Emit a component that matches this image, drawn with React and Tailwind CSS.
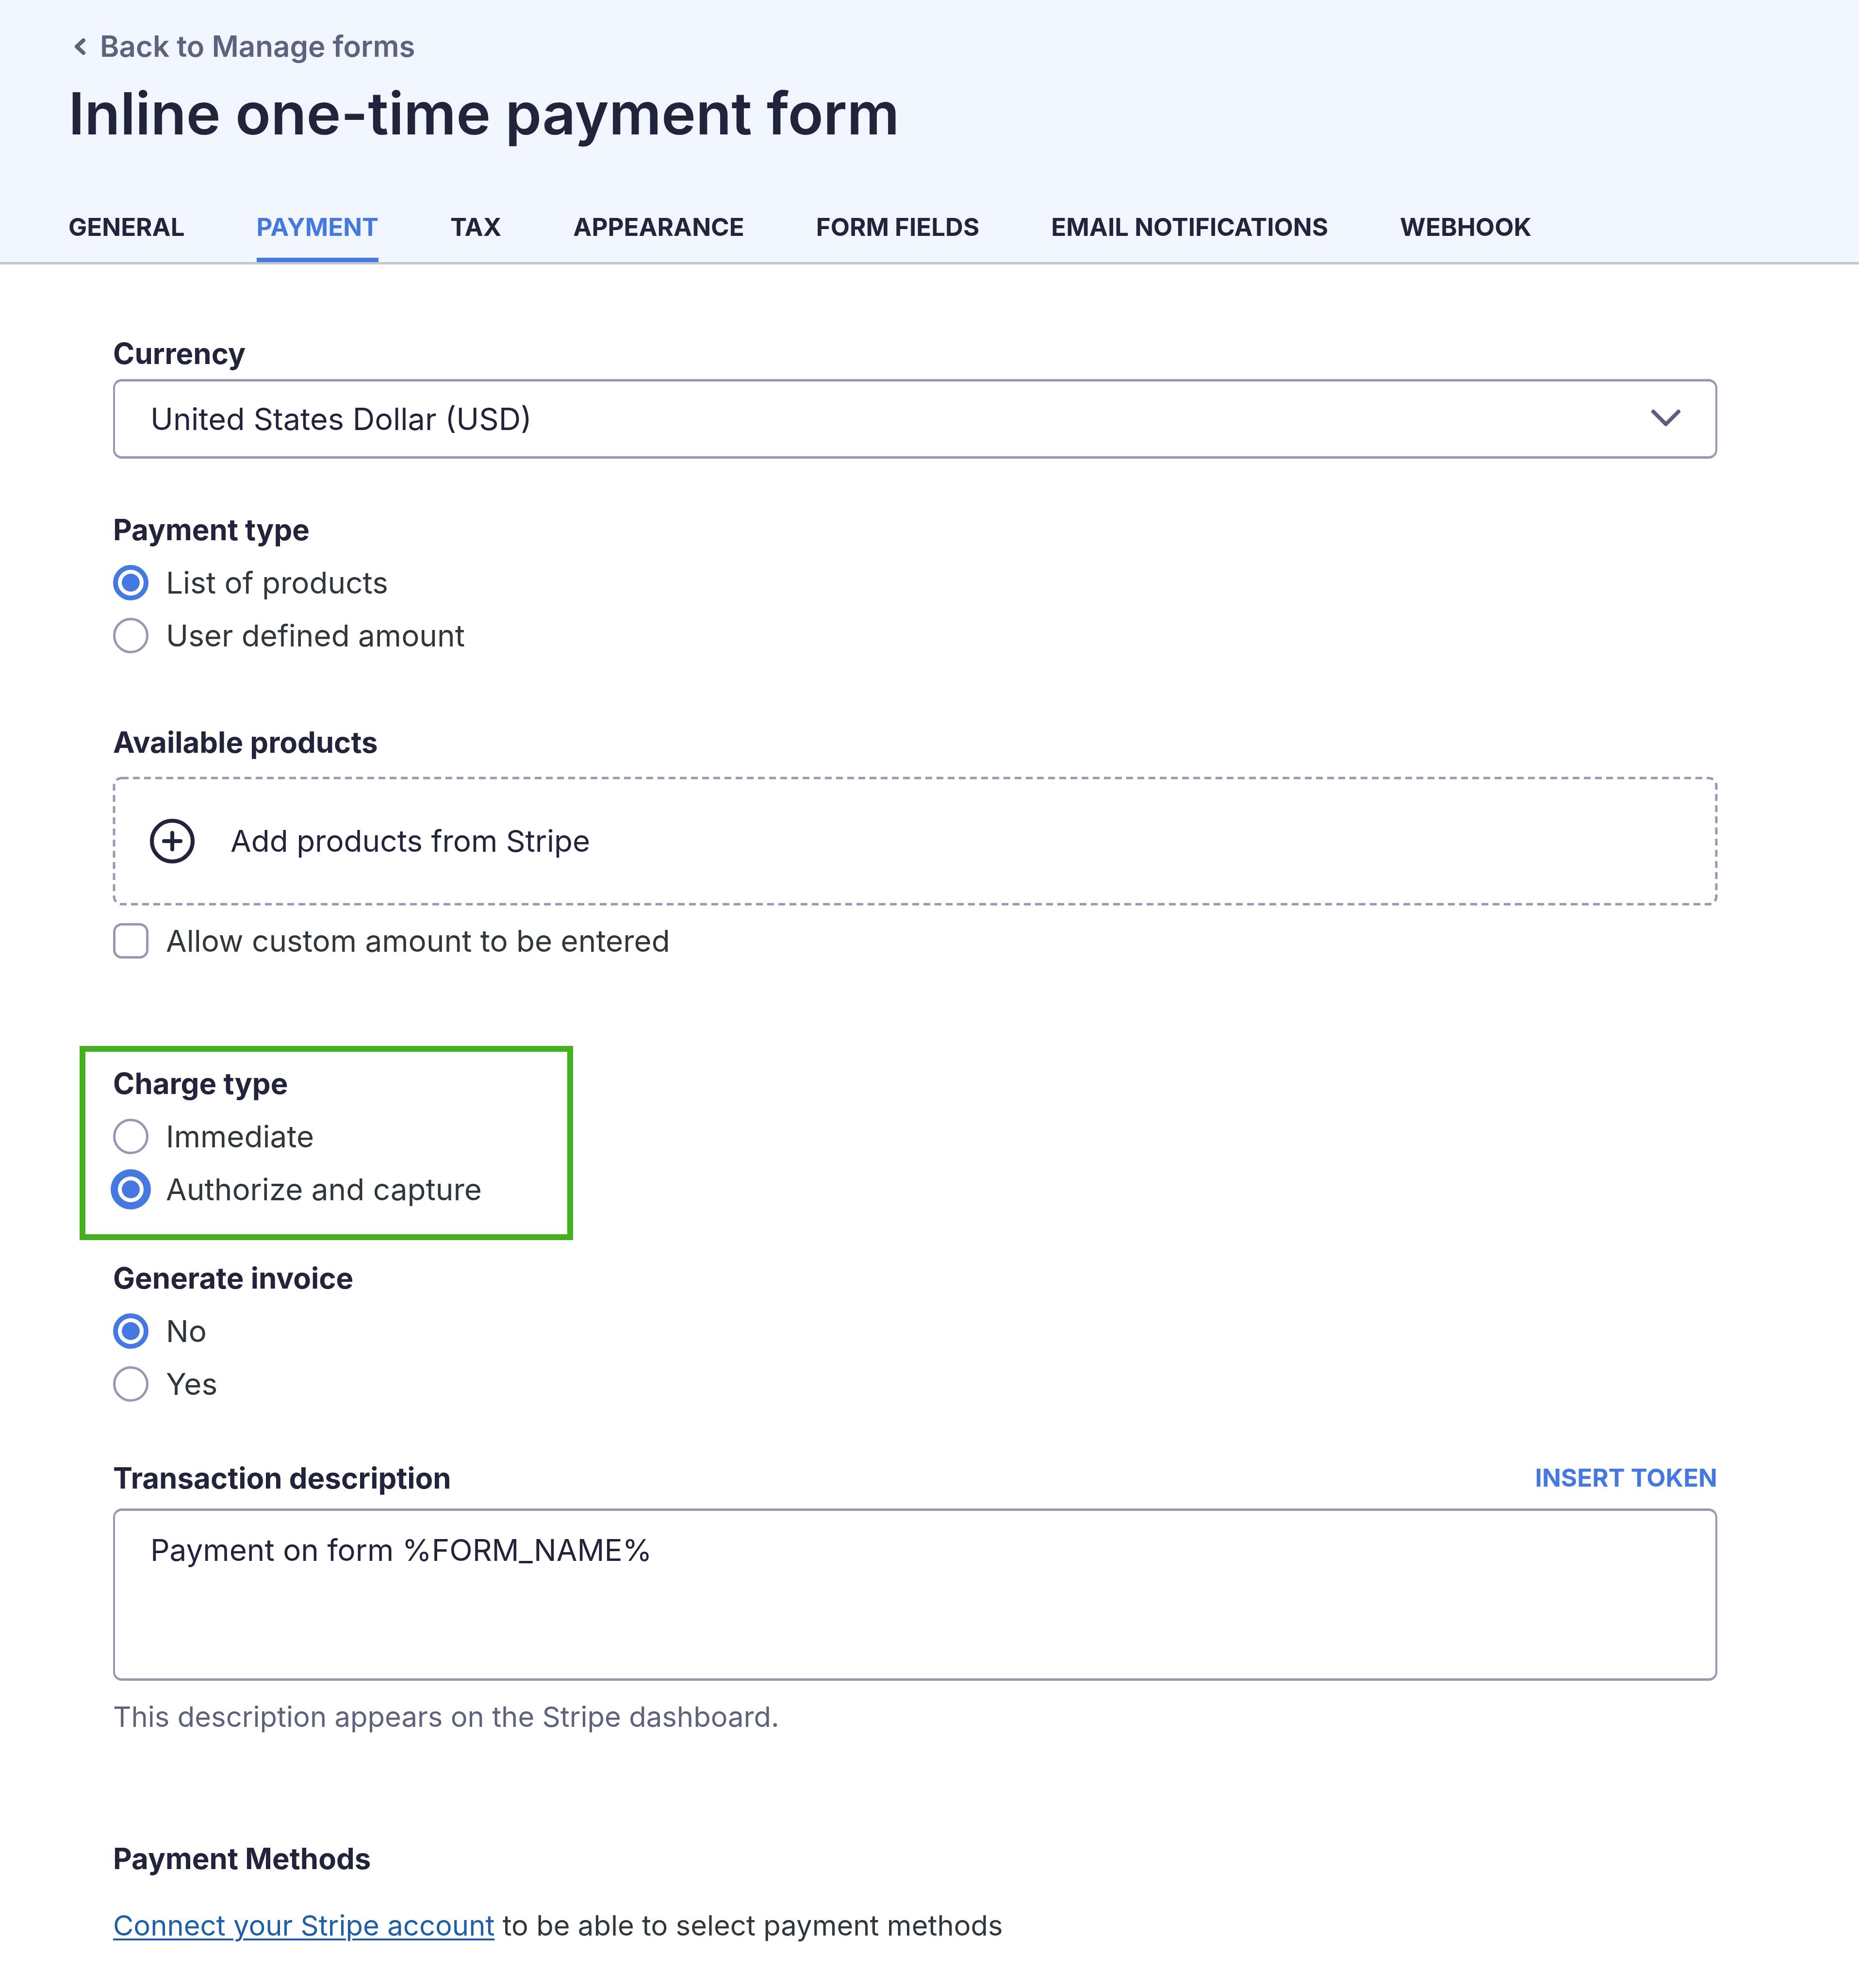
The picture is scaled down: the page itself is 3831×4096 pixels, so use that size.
import { useState } from "react";

const tabs = ["General", "Payment", "Tax", "Appearance", "Form fields", "Email notifications", "Webhook"];

function Radio({ name, label, checked, onChange, ring }) {
  return (
    <label className="flex w-fit items-center gap-[36px] text-[62px] leading-[73px] text-[#2f373d]">
      <input
        type="radio"
        name={name}
        checked={checked}
        onChange={onChange}
        className={
          "size-[73px] shrink-0 appearance-none rounded-full border-[5px] border-[#9599b1] bg-white outline-none checked:border-[10px] checked:border-[#4678e1] checked:bg-[#4678e1] checked:bg-clip-content checked:p-[8px] " +
          (ring ? "checked:ring-[5px] checked:ring-[#4678e1]" : "")
        }
      />
      {label}
    </label>
  );
}

function RadioGroup({ title, name, options, initial, ring, className = "" }) {
  const [value, setValue] = useState(initial);
  return (
    <div role="radiogroup" aria-labelledby={name + "-title"} className={className}>
      <h2 id={name + "-title"} className="text-[60px] leading-[72px] font-bold">
        {title}
      </h2>
      <div className="mt-[37px] flex flex-col gap-[36px]">
        {options.map((option) => (
          <Radio
            key={option}
            name={name}
            label={option}
            checked={value === option}
            onChange={() => setValue(option)}
            ring={ring}
          />
        ))}
      </div>
    </div>
  );
}

export default function App() {
  return (
    <div className="min-h-screen bg-white font-[Inter,sans-serif] text-[#22243b]">
      <header className="border-b-[5px] border-[#c3c6cf] bg-[#f1f5fe] px-[141px] pt-[59px]">
        <a href="#forms" className="flex w-fit items-center text-[60px] leading-[72px] font-semibold text-[#5f627d]">
          <svg viewBox="0 0 65 40" fill="none" aria-hidden="true" className="h-[40px] w-[65px]">
            <path d="M31 8 17 21l14 13" stroke="currentColor" strokeWidth="8" strokeLinecap="round" strokeLinejoin="round" />
          </svg>
          Back to Manage forms
        </a>
        <h1 className="mt-[31px] text-[120px] leading-[144px] font-semibold">Inline one-time payment form</h1>
        <nav className="mt-[130px] flex gap-[148px]">
          {tabs.map((tab) => (
            <a
              key={tab}
              href={"#" + tab.toLowerCase().replace(" ", "-")}
              aria-current={tab === "Payment" ? "page" : undefined}
              className="border-b-[9px] border-transparent pb-[31px] text-[51px] leading-[64px] font-bold whitespace-nowrap uppercase aria-[current=page]:border-[#4678e1] aria-[current=page]:text-[#4678e1]"
            >
              {tab}
            </a>
          ))}
        </nav>
      </header>

      <main className="pt-[147px] pr-[292px] pb-[74px] pl-[233px]">
        <label htmlFor="currency" className="block text-[60px] leading-[72px] font-bold">
          Currency
        </label>
        <div className="relative mt-[17px]">
          <select
            id="currency"
            className="block h-[164px] w-full appearance-none rounded-[18px] border-x-4 border-y-[5px] border-[#9599b1] bg-white px-[73px] text-[63px] leading-[84px]"
          >
            <option>United States Dollar (USD)</option>
          </select>
          <svg
            viewBox="0 0 64 40"
            fill="none"
            aria-hidden="true"
            className="pointer-events-none absolute top-[60px] right-[74px] h-[40px] w-[64px] text-[#5c607c]"
          >
            <path d="M6 7l26 26L58 7" stroke="currentColor" strokeWidth="8" strokeLinecap="round" strokeLinejoin="round" />
          </svg>
        </div>

        <RadioGroup
          className="mt-[110px]"
          title="Payment type"
          name="payment-type"
          options={["List of products", "User defined amount"]}
          initial="List of products"
        />

        <section className="mt-[147px]">
          <h2 className="text-[60px] leading-[72px] font-bold">Available products</h2>
          <button
            type="button"
            className="relative mt-[36px] flex h-[264px] w-full items-center gap-[74px] px-[76px] text-[62px] leading-[84px]"
          >
            <svg
              fill="none"
              aria-hidden="true"
              className="absolute inset-[2px] h-[calc(100%-4px)] w-[calc(100%-4px)] overflow-visible text-[#9599b1]"
            >
              <rect width="100%" height="100%" rx="16" stroke="currentColor" strokeWidth="5" strokeDasharray="14 9" />
            </svg>
            <svg viewBox="0 0 92 92" fill="none" aria-hidden="true" className="size-[92px]">
              <circle cx="46" cy="46" r="42" stroke="currentColor" strokeWidth="8" />
              <path d="M46 29v34M29 46h34" stroke="currentColor" strokeWidth="8" strokeLinecap="round" />
            </svg>
            Add products from Stripe
          </button>
          <label className="mt-[37px] flex w-fit items-center gap-[36px] text-[62px] leading-[73px] text-[#2f373d]">
            <input
              type="checkbox"
              className="size-[73px] shrink-0 appearance-none rounded-[18px] border-[5px] border-[#9599b1] bg-white checked:bg-[#4678e1]"
            />
            Allow custom amount to be entered
          </label>
        </section>

        <RadioGroup
          className="mt-[180px] -ml-[69px] w-[1017px] border-[12px] border-[#43b11f] pt-[29px] pb-[56px] pl-[57px]"
          title="Charge type"
          name="charge-type"
          options={["Immediate", "Authorize and capture"]}
          initial="Authorize and capture"
          ring
        />

        <RadioGroup
          className="mt-[42px]"
          title="Generate invoice"
          name="generate-invoice"
          options={["No", "Yes"]}
          initial="No"
        />

        <div className="mt-[121px] flex items-center justify-between">
          <label htmlFor="description" className="text-[60px] leading-[72px] font-bold">
            Transaction description
          </label>
          <button type="button" className="text-[51px] leading-[72px] font-bold text-[#4678e1] uppercase">
            Insert token
          </button>
        </div>
        <textarea
          id="description"
          defaultValue="Payment on form %FORM_NAME%"
          className="mt-[27px] block h-[355px] w-full resize-none rounded-[18px] border-x-4 border-y-[5px] border-[#9599b1] bg-white px-[73px] py-[39px] text-[62px] leading-[84px]"
        />
        <p className="mt-[38px] text-[58px] leading-[72px] text-[#5f627d]">
          This description appears on the Stripe dashboard.
        </p>

        <h2 className="mt-[220px] text-[60px] leading-[72px] font-bold">Payment Methods</h2>
        <p className="mt-[66px] text-[58px] leading-[72px] text-[#2f373d]">
          <a href="#connect" className="text-[#1f5fa8] underline decoration-[4px] underline-offset-[6px]">
            Connect your Stripe account
          </a>{" "}
          to be able to select payment methods
        </p>
      </main>
    </div>
  );
}
